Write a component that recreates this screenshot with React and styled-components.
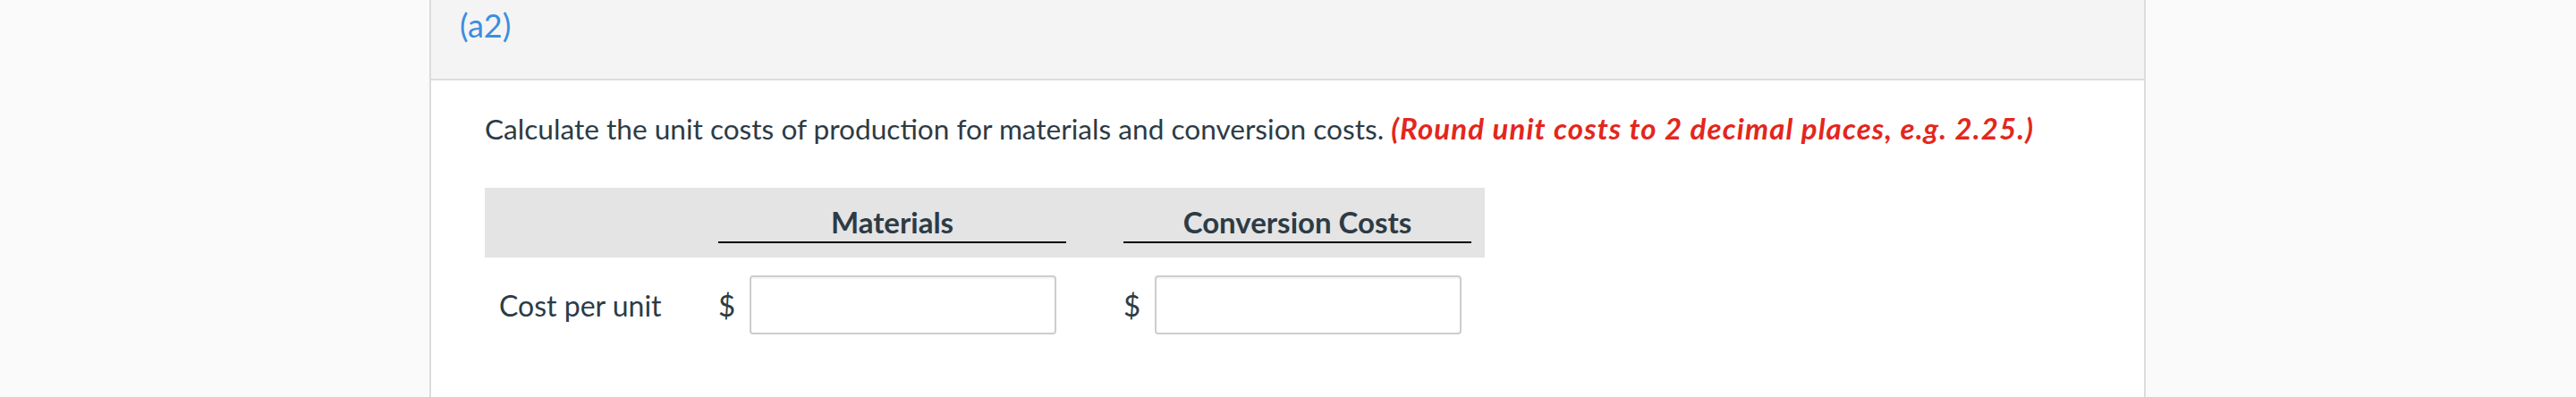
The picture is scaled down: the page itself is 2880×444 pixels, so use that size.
import React from "react";
import styled, { createGlobalStyle } from "styled-components";

const GlobalStyle = createGlobalStyle`
  html, body {
    margin: 0;
    padding: 0;
    background: #fafafa;
    overflow: hidden;
  }
  body {
    font-family: Lato, "Liberation Sans", sans-serif;
    color: #2d3b45;
  }
`;

const Page = styled.div`
  display: flex;
  padding-left: 480px;
  height: 444px;
`;

const Card = styled.section`
  width: 1915px;
  height: 520px;
  background: #fff;
  border-left: 2px solid #dcdcdc;
  border-right: 2px solid #dcdcdc;
`;

const Header = styled.header`
  height: 81px;
  padding: 7px 0 0 32px;
  background: #f4f4f4;
  border-bottom: 2px solid #dcdcdc;
`;

const PartLabel = styled.span`
  font-size: 36px;
  line-height: 42px;
  color: #3b8de0;
`;

const Body = styled.div`
  padding: 34px 0 0 60px;
`;

const Prompt = styled.p`
  margin: 0;
  font-size: 31.6px;
  line-height: 38.4px;
`;

const Hint = styled.span`
  color: #e4261c;
  font-weight: 700;
  font-style: italic;
  font-size: 33px;
  letter-spacing: 1.1px;
`;

const Table = styled.div`
  margin-top: 47px;
  width: 1118px;
`;

const HeadRow = styled.div`
  display: grid;
  grid-template-columns: 261px 389px 468px;
  height: 78px;
  background: #e4e4e4;
  align-items: end;
`;

const HeadCell = styled.div`
  width: 389px;
  margin: 0 0 16px ${(p) => p.$inset || 0}px;
  padding-bottom: 3px;
  border-bottom: 2px solid #000;
  text-align: center;
  font-weight: 700;
  font-size: 33px;
  line-height: 38px;
`;

const BodyRow = styled.div`
  display: grid;
  grid-template-columns: 261px 389px 468px;
  align-items: center;
  margin-top: 20px;
`;

const RowLabel = styled.div`
  padding-left: 16px;
  font-size: 32px;
`;

const AmountCell = styled.div`
  display: flex;
  align-items: center;
  gap: 17px;
  margin-left: ${(p) => p.$inset || 0}px;
`;

const Dollar = styled.span`
  font-size: 33px;
  width: 18px;
`;

const AmountInput = styled.input`
  box-sizing: border-box;
  width: 343px;
  height: 66px;
  border: 2px solid #cdcdcd;
  border-radius: 4px;
  background: #fff;
  box-shadow: inset 0 2px 2px rgba(0, 0, 0, 0.04);
  font-family: inherit;
  font-size: 30px;
  outline: none;
`;

export default function App() {
  return (
    <>
      <GlobalStyle />
      <Page>
        <Card>
          <Header>
            <PartLabel>(a2)</PartLabel>
          </Header>
          <Body>
            <Prompt>
              Calculate the unit costs of production for materials and conversion costs.{" "}
              <Hint>(Round unit costs to 2 decimal places, e.g. 2.25.)</Hint>
            </Prompt>
            <Table>
              <HeadRow>
                <div />
                <HeadCell>Materials</HeadCell>
                <HeadCell $inset={64}>Conversion Costs</HeadCell>
              </HeadRow>
              <BodyRow>
                <RowLabel>Cost per unit</RowLabel>
                <AmountCell>
                  <Dollar>$</Dollar>
                  <AmountInput />
                </AmountCell>
                <AmountCell $inset={64}>
                  <Dollar>$</Dollar>
                  <AmountInput />
                </AmountCell>
              </BodyRow>
            </Table>
          </Body>
        </Card>
      </Page>
    </>
  );
}
